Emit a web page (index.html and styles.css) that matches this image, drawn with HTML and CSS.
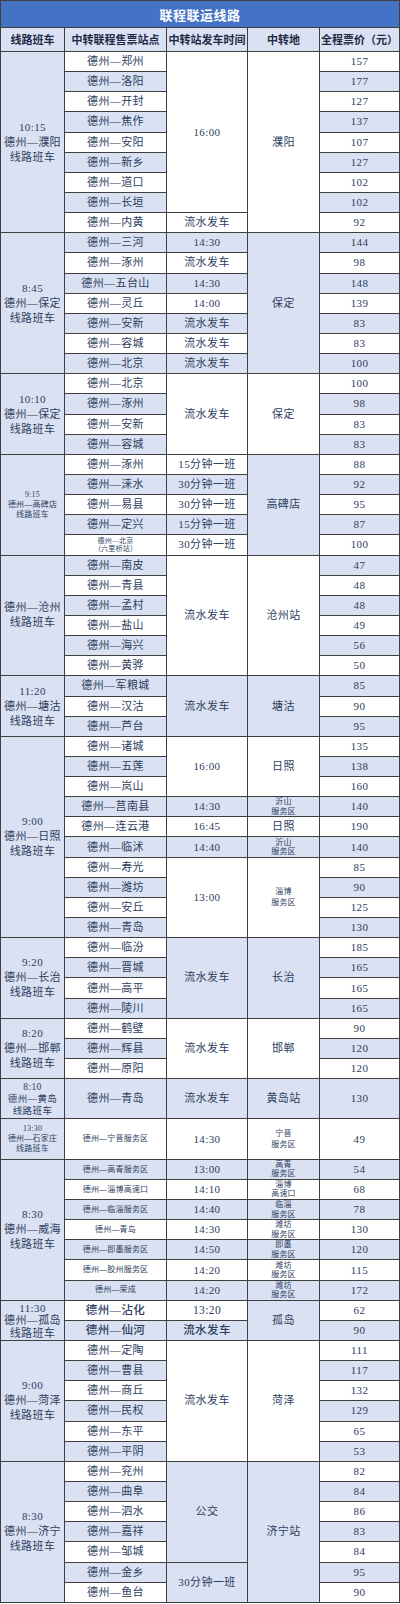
FILE: index.html
```html
<!DOCTYPE html>
<html lang="zh-CN">
<head>
<meta charset="utf-8">
<title>联程联运线路</title>
<link rel="stylesheet" href="styles.css">
</head>
<body>
<div class="sheet">
  <div class="title">联程联运线路</div>
  <div class="h">线路班车</div>
  <div class="h">中转联程售票站点</div>
  <div class="h">中转站发车时间</div>
  <div class="h">中转地</div>
  <div class="h">全程票价（元）</div>

  <!-- 濮阳 -->
  <div class="c b route s9">10:15<br>德州—濮阳<br>线路班车</div>
  <div class="c">德州—郑州</div>
  <div class="c s8">16:00</div>
  <div class="c s9">濮阳</div>
  <div class="c">157</div>
  <div class="c b">德州—洛阳</div><div class="c b">177</div>
  <div class="c">德州—开封</div><div class="c">127</div>
  <div class="c b">德州—焦作</div><div class="c b">137</div>
  <div class="c">德州—安阳</div><div class="c">107</div>
  <div class="c b">德州—新乡</div><div class="c b">127</div>
  <div class="c">德州—道口</div><div class="c">102</div>
  <div class="c b">德州—长垣</div><div class="c b">102</div>
  <div class="c">德州—内黄</div><div class="c">流水发车</div><div class="c">92</div>

  <!-- 保定 8:45 -->
  <div class="c b route s7">8:45<br>德州—保定<br>线路班车</div>
  <div class="c b">德州—三河</div>
  <div class="c b">14:30</div>
  <div class="c b s7">保定</div>
  <div class="c b">144</div>
  <div class="c">德州—涿州</div><div class="c">流水发车</div><div class="c">98</div>
  <div class="c b">德州—五台山</div><div class="c b">14:30</div><div class="c b">148</div>
  <div class="c">德州—灵丘</div><div class="c">14:00</div><div class="c">139</div>
  <div class="c b">德州—安新</div><div class="c b">流水发车</div><div class="c b">83</div>
  <div class="c">德州—容城</div><div class="c">流水发车</div><div class="c">83</div>
  <div class="c b">德州—北京</div><div class="c b">流水发车</div><div class="c b">100</div>

  <!-- 保定 10:10 -->
  <div class="c b route s4">10:10<br>德州—保定<br>线路班车</div>
  <div class="c">德州—北京</div>
  <div class="c s4">流水发车</div>
  <div class="c s4">保定</div>
  <div class="c">100</div>
  <div class="c b">德州—涿州</div><div class="c b">98</div>
  <div class="c">德州—安新</div><div class="c">83</div>
  <div class="c b">德州—容城</div><div class="c b">83</div>

  <!-- 高碑店 -->
  <div class="c b route rs s5">9:15<br>德州—高碑店<br>线路班车</div>
  <div class="c">德州—涿州</div>
  <div class="c">15分钟一班</div>
  <div class="c b s5">高碑店</div>
  <div class="c">88</div>
  <div class="c b">德州—涞水</div><div class="c b">30分钟一班</div><div class="c b">92</div>
  <div class="c">德州—易县</div><div class="c">30分钟一班</div><div class="c">95</div>
  <div class="c b">德州—定兴</div><div class="c b">15分钟一班</div><div class="c b">87</div>
  <div class="c xs">德州—北京<br>（六里桥站）</div><div class="c">30分钟一班</div><div class="c">100</div>

  <!-- 沧州 -->
  <div class="c b route s6">德州—沧州<br>线路班车</div>
  <div class="c b">德州—南皮</div>
  <div class="c s6">流水发车</div>
  <div class="c s6">沧州站</div>
  <div class="c b">47</div>
  <div class="c">德州—青县</div><div class="c">48</div>
  <div class="c b">德州—孟村</div><div class="c b">48</div>
  <div class="c">德州—盐山</div><div class="c">49</div>
  <div class="c b">德州—海兴</div><div class="c b">56</div>
  <div class="c">德州—黄骅</div><div class="c">50</div>

  <!-- 塘沽 -->
  <div class="c b route s3">11:20<br>德州—塘沽<br>线路班车</div>
  <div class="c b">德州—军粮城</div>
  <div class="c b s3">流水发车</div>
  <div class="c b s3">塘沽</div>
  <div class="c b">85</div>
  <div class="c">德州—汉沽</div><div class="c">90</div>
  <div class="c b">德州—芦台</div><div class="c b">95</div>

  <!-- 日照 -->
  <div class="c b route s10">9:00<br>德州—日照<br>线路班车</div>
  <div class="c">德州—诸城</div>
  <div class="c s3">16:00</div>
  <div class="c s3">日照</div>
  <div class="c">135</div>
  <div class="c b">德州—五莲</div><div class="c b">138</div>
  <div class="c">德州—岚山</div><div class="c">160</div>
  <div class="c b">德州—莒南县</div><div class="c b">14:30</div><div class="c b sm">沂山<br>服务区</div><div class="c b">140</div>
  <div class="c">德州—连云港</div><div class="c">16:45</div><div class="c">日照</div><div class="c">190</div>
  <div class="c b">德州—临沭</div><div class="c b">14:40</div><div class="c b sm">沂山<br>服务区</div><div class="c b">140</div>
  <div class="c">德州—寿光</div>
  <div class="c s4">13:00</div>
  <div class="c sm tall s4">淄博<br>服务区</div>
  <div class="c">85</div>
  <div class="c b">德州—潍坊</div><div class="c b">90</div>
  <div class="c">德州—安丘</div><div class="c">125</div>
  <div class="c b">德州—青岛</div><div class="c b">130</div>

  <!-- 长治 -->
  <div class="c b route s4">9:20<br>德州—长治<br>线路班车</div>
  <div class="c">德州—临汾</div>
  <div class="c b s4">流水发车</div>
  <div class="c b s4">长治</div>
  <div class="c">185</div>
  <div class="c b">德州—晋城</div><div class="c b">165</div>
  <div class="c">德州—高平</div><div class="c">165</div>
  <div class="c b">德州—陵川</div><div class="c b">165</div>

  <!-- 邯郸 -->
  <div class="c b route s3">8:20<br>德州—邯郸<br>线路班车</div>
  <div class="c">德州—鹤壁</div>
  <div class="c s3">流水发车</div>
  <div class="c s3">邯郸</div>
  <div class="c">90</div>
  <div class="c b">德州—辉县</div><div class="c b">120</div>
  <div class="c">德州—原阳</div><div class="c">120</div>

  <!-- 黄岛 -->
  <div class="c b route rm s2">8:10<br>德州—黄岛<br>线路班车</div>
  <div class="c b s2">德州—青岛</div>
  <div class="c b s2">流水发车</div>
  <div class="c b s2">黄岛站</div>
  <div class="c b s2">130</div>

  <!-- 石家庄 -->
  <div class="c b route rs s2">13:30<br>德州—石家庄<br>线路班车</div>
  <div class="c sm s2">德州—宁晋服务区</div>
  <div class="c s2">14:30</div>
  <div class="c sm tall s2">宁晋<br>服务区</div>
  <div class="c s2">49</div>

  <!-- 威海 -->
  <div class="c b route s7">8:30<br>德州—威海<br>线路班车</div>
  <div class="c b sm">德州—高青服务区</div><div class="c b">13:00</div><div class="c b sm">高青<br>服务区</div><div class="c b">54</div>
  <div class="c sm">德州—淄博高速口</div><div class="c">14:10</div><div class="c sm">淄博<br>高速口</div><div class="c">68</div>
  <div class="c b sm">德州—临淄服务区</div><div class="c b">14:40</div><div class="c b sm">临淄<br>服务区</div><div class="c b">78</div>
  <div class="c sm">德州—青岛</div><div class="c">14:30</div><div class="c sm">潍坊<br>服务区</div><div class="c">130</div>
  <div class="c b sm">德州—即墨服务区</div><div class="c b">14:50</div><div class="c b sm">即墨<br>服务区</div><div class="c b">120</div>
  <div class="c sm">德州—胶州服务区</div><div class="c">14:20</div><div class="c sm">潍坊<br>服务区</div><div class="c">115</div>
  <div class="c b sm">德州—荣成</div><div class="c b">14:20</div><div class="c b sm">潍坊<br>服务区</div><div class="c b">172</div>

  <!-- 孤岛 -->
  <div class="c b route rt s2">11:30<br>德州—孤岛<br>线路班车</div>
  <div class="c big">德州—沾化</div>
  <div class="c big">13:20</div>
  <div class="c b s2">孤岛</div>
  <div class="c">62</div>
  <div class="c b big">德州—仙河</div><div class="c b big">流水发车</div><div class="c b">90</div>

  <!-- 菏泽 -->
  <div class="c b route s6">9:00<br>德州—菏泽<br>线路班车</div>
  <div class="c">德州—定陶</div>
  <div class="c s6">流水发车</div>
  <div class="c s6">菏泽</div>
  <div class="c">111</div>
  <div class="c b">德州—曹县</div><div class="c b">117</div>
  <div class="c">德州—商丘</div><div class="c">132</div>
  <div class="c b">德州—民权</div><div class="c b">129</div>
  <div class="c">德州—东平</div><div class="c">65</div>
  <div class="c b">德州—平阴</div><div class="c b">53</div>

  <!-- 济宁 -->
  <div class="c b route s7">8:30<br>德州—济宁<br>线路班车</div>
  <div class="c">德州—兖州</div>
  <div class="c b s5">公交</div>
  <div class="c b s7">济宁站</div>
  <div class="c">82</div>
  <div class="c b">德州—曲阜</div><div class="c b">84</div>
  <div class="c">德州—泗水</div><div class="c">86</div>
  <div class="c b">德州—嘉祥</div><div class="c b">83</div>
  <div class="c">德州—邹城</div><div class="c">84</div>
  <div class="c b">德州—金乡</div>
  <div class="c b s2">30分钟一班</div>
  <div class="c b">95</div>
  <div class="c">德州—鱼台</div><div class="c">90</div>
</div>
</body>
</html>
```

FILE: styles.css
```css
html, body {
  margin: 0;
  padding: 0;
  background: #ffffff;
}

.sheet {
  display: grid;
  width: 400px;
  box-sizing: border-box;
  grid-template-columns: 63px 101px 80px 71px 79px;
  grid-template-rows: 26px 23px repeat(77, 19.156px);
  gap: 1px;
  padding: 1px;
  background: #3f3f3f;
}

.title {
  grid-column: 1 / -1;
  display: flex;
  align-items: center;
  justify-content: center;
  background: #4472c4;
  color: #ffffff;
  font: 700 13px/1 "Noto Sans CJK SC", sans-serif;
  letter-spacing: 0.5px;
}

.h {
  display: flex;
  align-items: center;
  justify-content: center;
  background: #d9e1f2;
  color: #1f2b46;
  font: 700 11px/1 "Noto Sans CJK SC", sans-serif;
  white-space: nowrap;
}

.c {
  display: flex;
  align-items: center;
  justify-content: center;
  text-align: center;
  background: #ffffff;
  color: #2e3d5e;
  font: 400 11px/15px "Liberation Serif", "Noto Sans CJK SC", serif;
  letter-spacing: 0.4px;
  white-space: nowrap;
}

.b {
  background: #d9e1f2;
}

.route {
  line-height: 15px;
}

.rs {
  font-size: 8px;
  line-height: 10px;
  letter-spacing: 0.2px;
}

.rm {
  font-size: 9.5px;
  line-height: 12px;
}

.rt {
  line-height: 12.5px;
}

.sm {
  font-size: 8px;
  line-height: 9.5px;
  letter-spacing: 0.2px;
}

.tall {
  line-height: 11px;
}

.xs {
  font-size: 7px;
  line-height: 8px;
  letter-spacing: 0.2px;
}

.big {
  font-size: 11.5px;
  font-weight: 500;
}

.s2 { grid-row: span 2; }
.s3 { grid-row: span 3; }
.s4 { grid-row: span 4; }
.s5 { grid-row: span 5; }
.s6 { grid-row: span 6; }
.s7 { grid-row: span 7; }
.s8 { grid-row: span 8; }
.s9 { grid-row: span 9; }
.s10 { grid-row: span 10; }
```
